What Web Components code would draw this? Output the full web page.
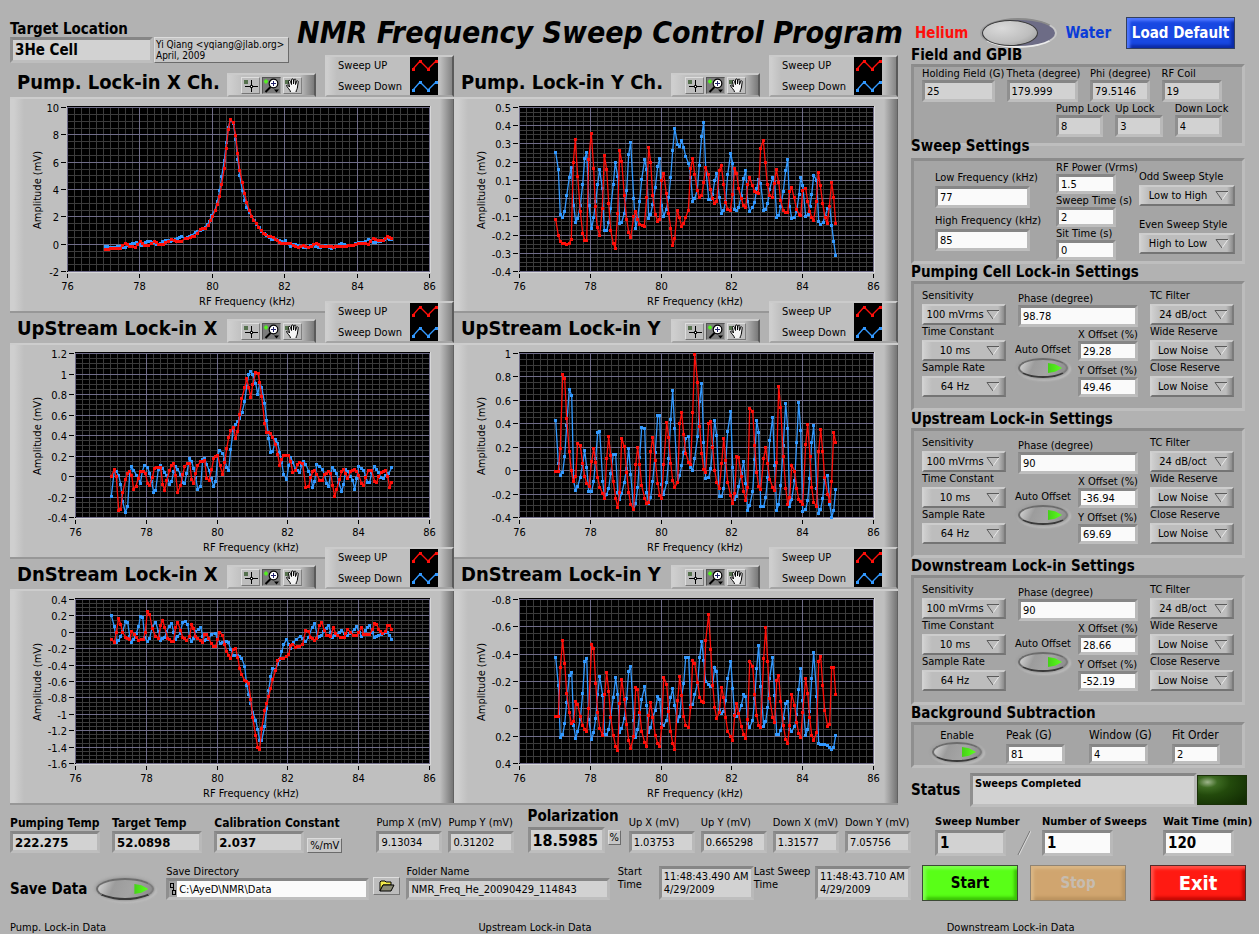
<!DOCTYPE html>
<html lang="en">
<head>
<meta charset="utf-8">
<title>NMR Frequency Sweep Control Program</title>
<style>
    html {
        background: #b2b2b2;
    }

    body {
        margin: 0;
        color: #000;
        font-family: "DejaVu Sans Condensed", "DejaVu Sans", "Noto Sans", sans-serif;
        font-size: 11px;
    }
</style>
</head>
<body>
<control-program></control-program>

<script>
// One list per trace: x y pairs, three units to a pixel. The origin is the
// position of the graph panel in the same units.
var TRACES = {
    pumpX: {
        origin: [30, 291],
        up: "317 748 325 748 340 745 360 744 375 730 388 738 405 742 421 724 432 737 445 736 462 725 475 732 490 733 505 724 515 718 530 723 545 723 555 716 570 712 582 708 592 700 600 688 615 685 625 677 632 660 638 648 647 630 652 612 659 590 665 552 673 505 679 445 685 388 691 358 700 368 707 407 713 460 719 510 727 547 734 580 740 608 748 630 755 648 761 660 770 670 776 682 790 700 805 709 820 712 832 722 845 730 870 730 880 737 895 741 910 735 925 741 935 739 948 729 960 739 980 738 1000 741 1020 738 1040 738 1060 737 1075 730 1105 732 1120 714 1135 722 1150 722 1163 709 1175 716",
        down: "317 739 335 742 360 740 375 742 390 733 410 728 425 737 435 727 452 724 468 733 480 731 497 720 512 725 525 718 545 708 555 716 575 707 585 697 600 692 615 683 628 665 635 645 645 630 652 605 659 572 665 530 673 480 679 428 685 382 691 360 700 370 707 418 713 478 719 525 727 570 734 600 740 623 748 637 755 650 770 672 785 695 800 706 815 717 830 718 845 725 855 722 870 740 880 732 895 736 910 742 925 742 940 733 955 743 975 737 995 744 1010 738 1025 729 1040 738 1060 736 1075 727 1090 728 1105 718 1120 727 1140 724 1160 716 1175 718"
    },
    pumpY: {
        origin: [12, 291],
        up: "317 658 325 706 331 724 338 730 350 733 358 730 364 718 370 487 376 419 383 529 391 634 398 700 404 721 410 721 416 479 424 400 431 505 436 620 442 683 449 706 457 625 463 466 470 508 476 610 482 692 490 730 496 745 503 640 509 451 515 484 523 587 530 658 536 697 542 712 551 650 557 634 563 658 569 673 583 679 590 592 596 442 602 487 608 587 616 643 623 664 629 658 635 541 641 520 649 580 656 640 662 685 668 737 674 715 682 631 688 652 695 679 701 671 707 652 715 631 722 505 728 475 734 523 742 571 748 592 755 587 761 547 767 502 775 523 781 568 788 595 794 610 800 604 808 511 814 496 821 553 827 608 833 628 841 631 848 583 854 505 860 520 866 566 874 595 880 616 887 623 893 553 899 532 907 556 914 574 925 580 932 445 940 421 946 487 952 553 959 586 967 592 973 550 979 508 986 547 992 601 1000 631 1007 637 1013 637 1019 574 1025 562 1032 592 1040 628 1047 643 1052 646 1058 571 1067 565 1073 604 1079 634 1085 652 1091 661 1099 604 1105 517 1111 556 1118 610 1125 652 1132 671 1138 619 1145 547 1151 592 1157 670",
        down: "317 457 325 508 331 643 338 653 344 634 350 587 358 532 364 502 371 616 377 667 383 655 391 616 398 553 404 475 410 458 417 616 425 685 431 652 437 604 443 553 449 508 457 566 463 692 470 692 476 667 482 625 490 553 496 487 503 529 509 671 515 667 523 640 530 571 536 463 542 427 551 595 557 685 563 655 569 604 575 538 584 478 590 508 596 655 602 643 608 613 616 562 623 499 629 475 635 616 641 649 649 628 656 592 662 532 668 451 674 385 683 433 689 439 695 422 701 442 707 469 716 491 722 532 728 604 734 595 742 571 748 496 755 409 761 367 767 502 776 598 782 598 788 583 794 541 800 520 808 592 815 640 821 631 827 604 833 523 842 460 848 491 854 628 860 631 866 622 874 586 881 535 887 511 893 604 899 634 908 622 914 607 920 565 926 538 932 550 941 631 947 628 953 610 959 568 968 532 974 547 980 652 986 646 992 619 1000 574 1007 511 1013 478 1019 619 1025 655 1034 652 1040 634 1047 583 1052 532 1058 556 1067 649 1074 643 1080 620 1085 583 1091 526 1100 541 1106 664 1112 673 1119 667 1125 650 1133 625 1139 619 1145 676 1151 724 1157 766"
    },
    upX: {
        origin: [30, 129],
        up: "334 529 343 509 349 530 356 631 362 628 368 577 377 538 383 520 389 514 395 526 401 569 408 558 421 514 430 514 436 520 443 550 449 556 457 533 463 506 470 503 482 502 488 553 494 571 500 541 509 511 515 496 521 490 527 526 533 577 542 556 548 523 554 499 563 490 569 490 575 538 581 550 587 520 593 496 602 485 614 482 620 535 627 541 635 508 641 475 653 465 660 497 668 523 674 487 680 445 686 412 692 392 700 382 707 415 713 394 719 344 725 296 734 263 740 236 746 262 752 292 758 254 767 217 774 220 779 247 785 290 794 370 800 397 812 400 818 412 827 434 833 463 839 496 845 479 851 466 866 466 872 484 878 517 887 511 893 493 899 487 908 490 917 562 926 559 932 533 938 515 944 511 950 523 959 541 967 541 973 523 985 515 992 520 998 556 1004 589 1010 567 1019 538 1025 514 1031 508 1037 520 1043 535 1052 514 1063 509 1070 514 1076 526 1085 550 1091 556 1097 532 1106 511 1115 512 1124 544 1130 547 1136 529 1145 517 1157 511 1163 529 1169 562 1175 547",
        down: "334 589 343 512 350 515 356 526 362 553 368 605 376 637 383 619 389 521 395 500 401 511 410 526 416 535 421 551 427 514 433 496 442 502 449 520 455 545 461 577 467 571 475 508 481 496 488 506 494 517 500 527 509 553 515 544 521 514 527 499 533 508 542 523 548 547 554 551 560 520 569 475 575 485 581 506 587 532 593 568 602 559 608 478 614 475 620 493 627 511 633 535 641 559 647 544 653 466 659 451 668 460 674 478 680 503 686 511 692 448 700 391 707 373 713 364 719 355 726 337 734 305 740 260 746 224 752 214 758 224 767 250 773 284 779 250 785 262 794 310 800 362 806 415 812 457 818 454 827 418 833 430 839 457 845 487 851 524 860 538 866 497 872 472 878 487 887 508 899 517 905 497 911 484 917 493 926 514 932 526 938 562 944 545 950 493 959 499 967 508 973 523 980 550 986 559 992 520 998 502 1004 511 1010 520 1016 547 1025 574 1031 553 1037 508 1043 514 1052 529 1058 541 1064 568 1070 535 1076 499 1085 505 1091 511 1097 530 1103 547 1109 547 1115 517 1124 499 1130 508 1136 517 1142 533 1151 535 1157 526 1166 520 1175 503"
    },
    upY: {
        origin: [12, 129],
        up: "317 514 325 514 331 445 338 224 344 236 350 356 358 454 364 511 370 544 377 529 383 430 391 436 398 490 404 529 410 550 417 559 425 484 431 445 437 487 443 533 449 562 458 580 464 595 470 475 476 410 482 467 490 544 497 595 503 622 509 577 515 415 523 439 530 517 536 577 542 613 551 628 557 493 563 442 569 493 575 556 584 595 590 610 596 607 602 454 608 412 616 481 623 550 629 586 635 595 641 493 650 367 656 412 662 490 668 541 674 562 683 547 689 370 695 338 701 403 707 460 716 487 722 493 728 338 734 163 743 247 749 379 755 460 761 508 767 517 776 370 782 364 788 442 794 511 800 547 808 565 815 490 821 415 827 481 833 547 842 586 848 610 854 580 860 469 866 472 874 529 881 574 887 601 893 562 899 325 908 334 914 436 920 517 926 559 932 569 941 475 947 442 953 490 959 538 968 562 974 571 980 487 986 259 992 323 1000 469 1007 565 1013 613 1019 592 1025 496 1034 514 1040 565 1046 598 1058 613 1067 433 1073 373 1080 469 1085 562 1091 607 1100 619 1106 454 1112 388 1118 454 1124 532 1133 583 1139 604 1145 544 1151 397 1157 427",
        down: "317 361 325 490 331 526 338 517 344 469 350 376 358 268 365 286 371 545 377 571 383 559 391 532 398 493 404 451 410 502 416 574 425 574 431 544 437 475 443 398 449 394 458 544 464 595 470 583 476 565 482 520 490 463 497 463 503 577 509 598 515 580 523 547 530 505 536 445 542 523 551 628 557 610 563 562 569 472 575 382 584 385 590 577 596 610 602 592 608 544 616 457 623 346 629 346 635 553 641 583 650 547 656 475 662 358 668 271 674 385 683 547 689 526 695 496 701 457 707 415 716 409 722 502 728 511 734 475 743 409 749 305 755 250 761 427 767 535 776 532 782 505 788 440 794 361 800 406 808 589 815 589 821 565 827 487 833 394 842 334 848 502 854 598 860 589 866 559 874 520 881 484 887 550 893 631 899 616 908 574 914 478 920 361 926 397 932 619 941 619 947 592 953 532 959 421 968 352 974 496 980 631 986 613 992 556 1000 437 1007 310 1013 385 1019 619 1025 598 1034 540 1040 427 1046 307 1052 391 1058 634 1067 628 1073 601 1079 535 1085 427 1091 376 1100 565 1106 640 1112 628 1118 595 1124 535 1133 526 1139 613 1145 652 1151 631 1157 568"
    },
    dnX: {
        origin: [30, 132],
        up: "334 283 343 292 349 262 356 220 362 238 368 262 377 277 389 283 395 259 404 268 416 286 430 283 436 262 442 200 449 209 457 250 467 274 475 280 482 241 488 226 494 247 503 279 515 289 521 289 527 247 533 232 542 256 548 277 560 286 569 274 575 238 581 249 587 274 600 286 608 291 614 267 620 267 633 294 641 304 647 304 653 282 659 262 668 271 674 298 680 319 686 331 692 340 700 312 707 310 713 337 719 370 725 389 734 406 746 415 752 463 758 518 767 571 773 606 779 613 785 550 794 496 800 475 806 454 812 430 818 404 827 376 833 346 840 340 851 341 860 334 866 328 872 302 878 298 887 307 899 304 908 297 917 256 926 260 932 277 944 286 950 280 958 242 965 232 973 256 980 271 992 274 1000 247 1007 265 1020 277 1032 277 1043 253 1052 262 1061 271 1070 271 1076 262 1085 247 1091 268 1109 268 1118 253 1124 235 1130 238 1136 253 1148 266 1157 259 1163 241 1169 241 1175 253",
        down: "334 211 343 244 350 292 356 286 362 274 368 259 377 229 383 232 389 274 395 292 401 283 409 265 416 244 421 214 428 217 434 277 442 289 449 280 457 244 467 232 475 259 482 286 494 277 500 259 508 243 515 235 521 262 527 283 540 265 548 232 556 229 563 238 569 277 575 289 581 280 587 259 602 247 608 274 614 286 625 283 635 268 645 265 653 280 660 295 674 289 685 292 692 313 700 330 712 331 725 340 734 364 740 421 746 448 752 475 758 502 767 526 773 553 779 586 785 586 794 544 800 490 806 436 812 394 818 371 827 373 833 358 839 343 845 320 851 298 860 283 866 298 872 310 880 292 890 283 900 274 908 280 917 289 926 277 936 247 944 236 953 277 965 271 978 249 986 241 992 262 998 277 1010 268 1025 256 1034 266 1043 271 1055 262 1063 253 1070 244 1077 262 1085 274 1095 256 1103 247 1109 241 1116 262 1124 277 1136 271 1150 264 1163 262 1175 283"
    },
    dnY: {
        origin: [12, 132],
        up: "317 514 325 514 331 367 338 286 344 355 350 445 358 502 364 535 371 529 377 469 383 478 391 514 398 541 404 553 410 559 416 490 425 298 431 310 437 415 443 502 449 550 458 571 464 448 470 382 476 439 482 517 490 571 497 604 503 616 509 475 515 403 523 463 530 538 536 586 542 610 551 574 557 427 563 433 569 502 575 559 584 592 590 604 596 511 602 472 608 517 616 571 623 595 629 604 635 547 641 397 650 418 656 499 662 559 668 595 674 613 683 466 689 394 695 451 701 514 707 541 716 547 722 487 728 346 734 355 743 412 749 457 755 469 761 472 767 286 776 208 782 313 788 421 794 487 800 520 808 502 815 427 821 457 827 517 833 559 842 574 848 586 854 511 860 475 866 505 874 544 881 568 887 580 893 523 899 349 908 364 914 448 920 511 926 541 932 547 941 340 947 247 953 349 959 460 968 517 974 532 980 406 986 391 992 469 1000 541 1007 583 1013 595 1019 541 1025 448 1034 481 1040 532 1046 565 1052 577 1058 502 1067 400 1073 445 1079 517 1085 571 1091 586 1100 562 1106 349 1112 334 1118 421 1124 496 1133 544 1139 538 1145 367 1151 367 1157 448",
        down: "317 337 325 421 331 577 338 569 344 536 350 472 358 391 365 382 371 541 377 580 383 559 391 523 398 445 404 349 410 340 416 523 425 583 431 562 437 520 443 448 449 394 458 451 464 568 470 569 476 553 482 515 490 457 497 397 503 448 509 562 515 550 523 520 530 460 536 379 542 364 551 526 557 577 563 553 569 508 575 463 584 424 590 481 596 562 602 547 608 517 616 496 623 454 629 463 635 535 641 541 650 526 656 490 662 457 668 430 674 481 683 529 689 514 695 451 701 415 707 337 716 337 722 481 728 478 734 448 743 415 749 337 755 289 761 346 767 409 776 418 782 424 788 421 794 367 800 379 808 493 815 505 821 499 827 466 833 400 842 349 848 430 854 508 860 514 866 508 874 481 881 448 887 454 893 535 899 547 908 526 914 460 920 370 926 301 932 424 941 544 947 529 953 487 959 400 968 337 974 451 980 568 986 568 992 556 1000 520 1007 475 1013 469 1019 553 1025 559 1034 544 1040 508 1046 433 1052 370 1058 466 1067 571 1073 553 1079 499 1085 400 1091 322 1100 454 1106 595 1112 598 1124 598 1133 601 1139 607 1145 613 1151 607 1157 571"
    }
};

// Text box or indicator with its caption above.
class NmrField extends HTMLElement {
    constructor() {
        super();
        this.attachShadow({ mode: "open" });
    }

    connectedCallback() {
        var readonly = this.hasAttribute("indicator") ? "readonly" : "";
        var label = this.getAttribute("label");
        var icon = this.hasAttribute("path")
            ? `<svg width="8" height="14" viewBox="0 0 8 14" shape-rendering="crispEdges"><path d="M1.5 1.5h3v4h-3zM4.500 5.500v3M3.500 8.500h3v4h-3z" fill="none" stroke="#000"/></svg>`
            : "";

        this.shadowRoot.innerHTML = `
            <style>
                :host {
                    display: flex;
                    flex-direction: column;
                    gap: var(--label-gap, 0px);
                    min-width: 0;
                }

                label {
                    font-size: var(--label-size, 11px);
                    line-height: 13px;
                    white-space: nowrap;
                }

                .box {
                    display: flex;
                    align-items: center;
                    height: var(--field-height, 22px);
                    box-sizing: border-box;
                    border: 3px solid;
                    border-color: #868686 #b9b9b9 #bebebe #8f8f8f;
                    background: #a2a2a2;
                }

                input {
                    flex: 1;
                    min-width: 0;
                    width: 0;
                    height: 100%;
                    box-sizing: border-box;
                    margin: 0;
                    padding: 0 2px;
                    border: 0;
                    border-radius: 0;
                    background: #fafafa;
                    color: #000;
                    font: inherit;
                    font-size: var(--value-size, 11px);
                }

                input[readonly] {
                    background: #d2d2d2;
                }

                :host([bold]) {
                    font-weight: bold;
                    --label-size: 12px;
                    --value-size: 13px;
                    --label-gap: 1px;
                }

                :host([large]) {
                    font-weight: bold;
                    --label-size: 15px;
                    --value-size: 16px;
                    --field-height: 26px;
                    --label-gap: 4px;
                }
            </style>
            <label for="value">${label}</label>
            <div class="box">${icon}<input id="value" value="${this.getAttribute("value")}" ${readonly}></div>
        `;
    }
}

// Multi-line indicator.
class NmrMemo extends HTMLElement {
    constructor() {
        super();
        this.attachShadow({ mode: "open" });
    }

    connectedCallback() {
        this.shadowRoot.innerHTML = `
            <style>
                :host {
                    display: block;
                    min-width: 0;
                }

                textarea {
                    display: block;
                    width: 100%;
                    height: 34px;
                    box-sizing: border-box;
                    margin: 0;
                    padding: 1px 2px;
                    border: 3px solid;
                    border-color: #868686 #b9b9b9 #bebebe #8f8f8f;
                    border-radius: 0;
                    background: #d2d2d2;
                    color: #000;
                    font: inherit;
                    line-height: 13px;
                    resize: none;
                    overflow: hidden;
                    white-space: pre;
                }
            </style>
            <textarea readonly aria-label="${this.getAttribute("label")}"></textarea>
        `;
        this.shadowRoot.querySelector("textarea").value = this.getAttribute("value").replace("|", "\n");
    }
}

class NmrRing extends HTMLElement {
    constructor() {
        super();
        this.attachShadow({ mode: "open" });
    }

    connectedCallback() {
        this.shadowRoot.innerHTML = `
            <style>
                :host {
                    display: flex;
                    flex-direction: column;
                    gap: 2px;
                    min-width: 0;
                }

                label {
                    line-height: 13px;
                    white-space: nowrap;
                }

                .ring {
                    display: grid;
                    align-items: center;
                }

                select,
                svg {
                    grid-area: 1 / 1;
                }

                select {
                    appearance: none;
                    width: 100%;
                    height: 21px;
                    box-sizing: border-box;
                    margin: 0;
                    padding: 0 19px 0 1px;
                    border: 2px solid;
                    border-color: #cdcdcd #7b7b7b #747474 #d2d2d2;
                    border-radius: 0;
                    background: linear-gradient(90deg, #cfcfcf, #bdbdbd 8px, #bdbdbd calc(100% - 6px), #8c8c8c);
                    color: #000;
                    font: inherit;
                    text-align-last: center;
                }

                svg {
                    justify-self: end;
                    margin-right: 6px;
                    pointer-events: none;
                }
            </style>
            <label for="choice">${this.getAttribute("label")}</label>
            <div class="ring">
                <select id="choice"><option>${this.getAttribute("value")}</option></select>
                <svg width="14" height="10" viewBox="0 0 14 10" fill="none">
                    <path d="M13 .5 7 9" stroke="#e8e8e8"/>
                    <path d="M13 .5H1L7 9" stroke="#5a5a5a"/>
                </svg>
            </div>
        `;
    }
}

// Oval push button with a green pointer.
class NmrToggle extends HTMLElement {
    constructor() {
        super();
        this.attachShadow({ mode: "open" });
    }

    connectedCallback() {
        this.shadowRoot.innerHTML = `
            <style>
                :host {
                    display: flex;
                    flex-direction: column;
                    align-items: center;
                    gap: var(--toggle-gap, 2px);
                    --width: 50px;
                }

                :host([inline]) {
                    flex-direction: row;
                    gap: 9px;
                    font-size: 15px;
                    font-weight: bold;
                    --width: 58px;
                }

                label {
                    line-height: 13px;
                    white-space: nowrap;
                }

                input {
                    appearance: none;
                    display: flex;
                    align-items: center;
                    justify-content: flex-end;
                    flex: none;
                    width: var(--width);
                    height: 20px;
                    box-sizing: border-box;
                    margin: 0;
                    padding-right: 4px;
                    border: 2px solid;
                    border-color: #6c6c6c #7d7d7d #3a3a3a #6c6c6c;
                    border-radius: 50%;
                    background: linear-gradient(115deg, #d8d8d8, #9c9c9c 30%, #a4a4a4 60%, #8a8a8a);
                    box-shadow: 0 0 3px 1px #8f8f8f, 1px 1px 2px 2px #c4c4c4;
                }

                :host([inline]) input {
                    height: 22px;
                }

                input::after {
                    content: "";
                    width: 14px;
                    height: 10px;
                    background: linear-gradient(90deg, #45d018, #5cff1e);
                    clip-path: polygon(0 0, 50% 12%, 100% 50%, 50% 88%, 0 100%);
                }
            </style>
            <label for="state">${this.getAttribute("label")}</label>
            <input id="state" type="checkbox" checked>
        `;
    }
}

class NmrButton extends HTMLElement {
    constructor() {
        super();
        this.attachShadow({ mode: "open" });
    }

    connectedCallback() {
        this.shadowRoot.innerHTML = `
            <style>
                :host {
                    display: block;
                    --face: #59ff17;
                    --light: #7dff4c;
                    --shade: #3cc406;
                    --edge: #3c4a36;
                    --ink: #000;
                }

                :host([kind="load"]) {
                    --face: #1848e2;
                    --light: #5078ff;
                    --shade: #0c2ba6;
                    --edge: #33405e;
                    --ink: #fff;
                }

                :host([kind="stop"]) {
                    --face: #d0a56f;
                    --light: #dab684;
                    --shade: #bb935f;
                    --edge: #8f8474;
                    --ink: #c6bcb0;
                }

                :host([kind="exit"]) {
                    --face: #ff1a12;
                    --light: #ff5148;
                    --shade: #c60a04;
                    --edge: #552b2a;
                    --ink: #fff;
                    font-size: 20px;
                }

                button {
                    display: block;
                    width: 100%;
                    height: 36px;
                    margin: 0;
                    padding: 0;
                    border: 1px solid var(--edge);
                    border-radius: 0;
                    background: var(--face);
                    box-shadow: inset 3px 3px 3px var(--light), inset -3px -3px 3px var(--shade);
                    color: var(--ink);
                    font: inherit;
                    font-weight: bold;
                    white-space: nowrap;
                }

                :host([kind="load"]) button {
                    height: 32px;
                }
            </style>
            <button type="button"${this.hasAttribute("disabled") ? " disabled" : ""}><slot></slot></button>
        `;
    }
}

// Titled group of controls.
class NmrSection extends HTMLElement {
    constructor() {
        super();
        this.attachShadow({ mode: "open" });
    }

    connectedCallback() {
        this.shadowRoot.innerHTML = `
            <style>
                :host {
                    display: block;
                    position: relative;
                }

                h2 {
                    margin: 0;
                    font-size: 15px;
                    line-height: 17px;
                    white-space: nowrap;
                }

                /* The heading runs over the frame of the group above. */
                :host([tight]) h2 {
                    margin: -8px 0 3px;
                }

                .frame {
                    border: 3px solid;
                    border-color: #8c8c8c #bcbcbc #bebebe #8f8f8f;
                    background: #a5a5a5;
                }
            </style>
            <h2>${this.getAttribute("heading")}</h2>
            <div class="frame"><slot></slot></div>
        `;
    }
}

class LockinSettings extends HTMLElement {
    constructor() {
        super();
        this.attachShadow({ mode: "open" });
    }

    connectedCallback() {
        this.shadowRoot.innerHTML = `
            <style>
                :host {
                    display: block;
                }

                .columns {
                    display: grid;
                    grid-template-columns: 84fr 124fr 84fr;
                    gap: 10px;
                    padding: 5px 8px 11px;
                }

                .middle {
                    padding: 3px 2px 0;
                }

                .offsets {
                    display: grid;
                    grid-template-columns: minmax(0, 1fr) 60px;
                    gap: 10px;
                    padding-top: 1px;
                }

                .offsets nmr-toggle {
                    padding-top: 15px;
                }

                .pair {
                    display: grid;
                    gap: 3px;
                    --field-height: 20px;
                }
            </style>
            <nmr-section heading="${this.getAttribute("heading")}">
                <div class="columns">
                    <div>
                        <nmr-ring label="Sensitivity" value="100 mVrms"></nmr-ring>
                        <nmr-ring label="Time Constant" value="10 ms"></nmr-ring>
                        <nmr-ring label="Sample Rate" value="64 Hz"></nmr-ring>
                    </div>
                    <div class="middle">
                        <nmr-field label="Phase (degree)" value="${this.getAttribute("phase")}"></nmr-field>
                        <div class="offsets">
                            <nmr-toggle label="Auto Offset"></nmr-toggle>
                            <div class="pair">
                                <nmr-field label="X Offset (%)" value="${this.getAttribute("x")}"></nmr-field>
                                <nmr-field label="Y Offset (%)" value="${this.getAttribute("y")}"></nmr-field>
                            </div>
                        </div>
                    </div>
                    <div>
                        <nmr-ring label="TC Filter" value="24 dB/oct"></nmr-ring>
                        <nmr-ring label="Wide Reserve" value="Low Noise"></nmr-ring>
                        <nmr-ring label="Close Reserve" value="Low Noise"></nmr-ring>
                    </div>
                </div>
            </nmr-section>
        `;
    }
}

// Cursor, zoom and pan buttons of a graph.
class GraphPalette extends HTMLElement {
    constructor() {
        super();
        this.attachShadow({ mode: "open" });
    }

    connectedCallback() {
        this.shadowRoot.innerHTML = `
            <style>
                :host {
                    display: flex;
                    align-items: center;
                    gap: 2px;
                    height: 24px;
                    box-sizing: border-box;
                    padding-left: 12px;
                    border: 2px solid;
                    border-color: #cbcbcb #5a5a5a #a4a4a4 #cecece;
                    background: linear-gradient(90deg, #cfcfcf, #bfbfbf 14px, #bfbfbf calc(100% - 14px), #7a7a7a);
                }

                button {
                    width: 19px;
                    height: 17px;
                    margin: 0;
                    padding: 0;
                    border: 1px solid;
                    border-color: #dedede #808080 #767676 #dedede;
                    border-radius: 0;
                    background: #bdbdbd;
                }

                button.on {
                    border-color: #555 #a0a0a0 #a0a0a0 #555;
                    background: #7b7b7b;
                }

                svg {
                    display: block;
                }
            </style>
            <button type="button" aria-label="Cursor">
                <svg width="17" height="15" viewBox="0 0 17 15">
                    <path d="M2 2h4v4H2z" fill="#56714e"/>
                    <path d="M9.500 2v12M3 8.500h13" stroke="#000"/>
                    <path d="M8.500 7.500h2v2h-2z" fill="#fff" stroke="#000"/>
                </svg>
            </button>
            <button type="button" class="on" aria-label="Zoom">
                <svg width="17" height="15" viewBox="0 0 17 15">
                    <path d="M1 3.500h4M3 1.500v4" stroke="#54f021" stroke-width="2"/>
                    <path d="m7.500 9-5 5" stroke="#000" stroke-width="2"/>
                    <circle cx="10.500" cy="5.500" r="4.300" fill="#fff" stroke="#000" stroke-width="1.200"/>
                    <path d="M8 5.500h5M10.500 3v5" stroke="#22226a"/>
                    <path d="M11 11.500h5l-2.500 3z"/>
                </svg>
            </button>
            <button type="button" aria-label="Pan">
                <svg width="17" height="15" viewBox="0 0 17 15">
                    <path d="M1 2h4v4H1z" fill="#56714e"/>
                    <path d="M6.500 14c0-2-3.500-4.500-4-6.500 1-1 2 0 3 1.500L4.500 3.500c0-1.500 1.500-1.500 2 0L7.500 6.500V2c0-1.500 2-1.500 2 0v4l.5-4c.5-1.500 2-1 1.900.3L11.500 6.500l1-3c.7-1.300 2-.6 1.700.6L13.500 9c-.2 2.500-1.300 3-1.500 5" fill="#f4f4f4" stroke="#000"/>
                </svg>
            </button>
        `;
    }
}

class SweepGraph extends HTMLElement {
    constructor() {
        super();
        this.attachShadow({ mode: "open" });
    }

    connectedCallback() {
        this.left = Number(this.getAttribute("left") || 66);
        this.right = 420;
        this.upper = 10;
        this.lower = 174;

        this.shadowRoot.innerHTML = `
            <style>
                :host {
                    display: block;
                    position: relative;
                    min-width: 0;
                }

                /* The legend is taller than the row and reaches up over the panel above. */
                header {
                    display: grid;
                    grid-template: 30px / minmax(0, 1fr) 89px 129px;
                    column-gap: 9px;
                    align-items: end;
                }

                h2 {
                    margin: 0;
                    padding-left: 7px;
                    font-size: 20px;
                    line-height: 30px;
                    white-space: nowrap;
                }

                .legend {
                    display: grid;
                    grid-template-columns: 1fr 28px;
                    align-content: center;
                    height: 42px;
                    box-sizing: border-box;
                    padding: 0 14px 0 11px;
                    border: 2px solid;
                    border-color: #cbcbcb #5a5a5a #a4a4a4 #cecece;
                    background: linear-gradient(90deg, #cfcfcf, #bfbfbf 10px, #bfbfbf calc(100% - 12px), #868686);
                }

                .legend span {
                    line-height: 21px;
                }

                .legend svg {
                    grid-area: 1 / 2 / 3 / 3;
                    align-self: center;
                    display: block;
                    background: #000;
                }

                .panel {
                    box-sizing: border-box;
                    background: linear-gradient(90deg, #cfcfcf 4px, #bfbfbf 14px, #bfbfbf calc(100% - 14px), #757575 calc(100% - 1px), #4f4f4f);
                    box-shadow: inset 0 2px #cdcdcd, inset 0 -2px #979797;
                }

                .panel svg {
                    display: block;
                    width: 100%;
                    height: auto;
                }

                text {
                    font-size: 11px;
                }
            </style>
            <header>
                <h2>${this.getAttribute("heading")}</h2>
                <graph-palette></graph-palette>
                <div class="legend">
                    <span>Sweep UP</span>
                    <span>Sweep Down</span>
                    <svg width="28" height="38" viewBox="0 0 28 38">
                        ${this.plot([[3, 12], [10, 4], [18, 12], [26, 4]], "#ff0f0a")}
                        ${this.plot([[3, 33], [10, 25], [18, 33], [26, 25]], "#3399ff")}
                    </svg>
                </div>
            </header>
            <div class="panel">
                <svg viewBox="0 0 444 216" role="img" aria-label="Amplitude against RF frequency">
                    ${this.grid()}
                    ${this.traces()}
                </svg>
            </div>
        `;
    }

    grid() {
        var top = Number(this.getAttribute("top"));
        var bottom = Number(this.getAttribute("bottom"));
        var step = Number(this.getAttribute("step"));
        var rows = Math.round(Math.abs(top - bottom) / step);
        var width = this.right - this.left;
        var height = this.lower - this.upper;
        var minor = "";
        var major = "";
        var marks = "";
        var labels = "";
        var i, pos;

        for (i = 0; i <= 50; i++) {
            pos = Math.round(this.left + width * i / 50) - 0.5;
            if (i % 10) {
                minor += `M${pos} ${this.upper}V${this.lower}`;
                continue;
            }
            major += `M${pos} ${this.upper}V${this.lower}`;
            marks += `M${pos} 177v4`;
            labels += `<text x="${pos}" y="193" text-anchor="middle">${76 + i / 5}</text>`;
        }

        for (i = 0; i <= rows * 4; i++) {
            pos = Math.round(this.upper + height * i / (rows * 4)) + 0.5;
            if (i % 4) {
                minor += `M${this.left} ${pos}H${this.right}`;
                continue;
            }
            major += `M${this.left} ${pos}H${this.right}`;
            marks += `M${this.left - 7} ${pos}h5`;
            labels += `<text x="${this.left - 9}" y="${pos + 4}" text-anchor="end">${Number((top + (bottom - top) * i / (rows * 4)).toFixed(1))}</text>`;
        }

        return `
            <rect x="${this.left - 1}" y="9" width="${width + 2}" height="167" fill="#d8d8d8"/>
            <rect x="${this.left - 1}" y="9" width="${width + 1}" height="166" fill="#000"/>
            <g stroke-width="1" shape-rendering="crispEdges">
                <path d="${minor}" stroke="#3b3b3b"/>
                <path d="${major}" stroke="#6f6c88"/>
                <path d="${marks}" stroke="#000"/>
            </g>
            ${labels}
            <text x="${(this.left + this.right) / 2 - 2}" y="208" text-anchor="middle">RF Frequency (kHz)</text>
            <text transform="translate(31 93) rotate(-90)" text-anchor="middle">Amplitude (mV)</text>
        `;
    }

    traces() {
        var data = TRACES[this.getAttribute("trace")];
        return this.plot(this.samples(data.down, data.origin), "#3399ff") +
            this.plot(this.samples(data.up, data.origin), "#ff0f0a");
    }

    samples(list, origin) {
        var numbers = list.split(" ").map(Number);
        var points = [];

        for (var i = 0; i < numbers.length; i += 2) {
            var x = (numbers[i] - origin[0]) / 3;
            var y = (numbers[i + 1] - origin[1]) / 3;
            var last = points[points.length - 1];
            var steps = last ? Math.round((x - last[0]) / 2.4) : 1;
            for (var n = 1; n < steps; n++) {
                points.push([last[0] + (x - last[0]) * n / steps, last[1] + (y - last[1]) * n / steps]);
            }
            points.push([x, y]);
        }
        return points;
    }

    plot(points, color) {
        var line = points.map(function (p) {
            return p[0].toFixed(1) + "," + p[1].toFixed(1);
        }).join(" ");
        var dots = points.map(function (p) {
            return `M${Math.round(p[0] - 1.5)} ${Math.round(p[1] - 1.5)}h3v3h-3z`;
        }).join("");
        return `<polyline points="${line}" fill="none" stroke="${color}" stroke-width="1.3"/><path d="${dots}" fill="${color}"/>`;
    }
}

class ControlProgram extends HTMLElement {
    constructor() {
        super();
        this.attachShadow({ mode: "open" });
    }

    connectedCallback() {
        this.shadowRoot.innerHTML = `
            <style>
                :host {
                    display: block;
                }

                main {
                    display: grid;
                    grid-template-columns: minmax(0, 911fr) minmax(0, 348fr);
                }

                .left {
                    padding-left: 10px;
                }

                .title {
                    display: flex;
                    align-items: flex-end;
                    min-height: 67px;
                    box-sizing: border-box;
                    padding: 15px 0 4px;
                }

                .title nmr-field {
                    flex: none;
                    width: 143px;
                    --field-height: 26px;
                    --label-size: 15px;
                    --value-size: 15px;
                    --label-gap: 1px;
                }

                .note {
                    flex: none;
                    width: 135px;
                    height: 26px;
                    box-sizing: border-box;
                    margin: 0 0 0 1px;
                    padding: 1px;
                    border: 1px solid;
                    border-color: #dcdcdc #6b6b6b #6b6b6b #dcdcdc;
                    background: #c6c6c6;
                    font-size: 10px;
                    line-height: 11px;
                    white-space: nowrap;
                }

                h1 {
                    flex: 1;
                    align-self: flex-start;
                    margin: 0;
                    font-size: 30px;
                    font-style: italic;
                    line-height: 36px;
                    text-align: center;
                    white-space: nowrap;
                }

                .graphs {
                    display: grid;
                    grid-template-columns: repeat(2, minmax(0, 1fr));
                    margin-right: 13px;
                }

                .readouts {
                    display: grid;
                    grid-template-columns: 102fr 102fr 162fr 72fr 79fr 101fr 72fr 72fr 72fr 66fr;
                    align-items: end;
                    height: 48px;
                    --label-gap: 2px;
                }

                .readouts > * {
                    min-width: 0;
                }

                .readouts nmr-field {
                    width: 66px;
                }

                .readouts nmr-field[bold] {
                    width: 90px;
                }

                .readouts nmr-field[large] {
                    width: 77px;
                }

                .unit {
                    display: flex;
                    align-items: flex-end;
                    gap: 3px;
                }

                .unit span {
                    padding: 0 2px;
                    border: 1px solid;
                    border-color: #dcdcdc #6b6b6b #6b6b6b #dcdcdc;
                    background: #c6c6c6;
                    line-height: 13px;
                }

                .unit nmr-field[large] + span {
                    padding: 0 1px;
                    margin-bottom: 8px;
                }

                .files {
                    display: grid;
                    grid-template-columns: 156fr 207fr 33fr 211fr 41fr 95fr 61fr 96fr;
                    align-items: end;
                    padding: 12px 0 21px;
                }

                .files nmr-toggle {
                    justify-self: start;
                }

                .files nmr-field[path] {
                    margin-right: 4px;
                }

                .files nmr-field[indicator] {
                    margin-right: 8px;
                }

                .browse {
                    width: 27px;
                    height: 18px;
                    margin: 0 0 5px;
                    padding: 0;
                    border: 1px solid;
                    border-color: #dedede #777 #777 #dedede;
                    border-radius: 0;
                    background: #bdbdbd;
                }

                .browse svg {
                    display: block;
                    margin: auto;
                }

                .caption {
                    align-self: start;
                    line-height: 13px;
                }

                .state {
                    display: flex;
                    align-items: center;
                    padding-top: 17px;
                    margin-bottom: -2px;
                    font-size: 15px;
                    font-weight: bold;
                }

                .helium {
                    padding-left: 4px;
                    color: #ff0f0a;
                }

                .water {
                    color: #0a3cd8;
                }

                .switch {
                    appearance: none;
                    display: flex;
                    flex: none;
                    width: 77px;
                    height: 30px;
                    box-sizing: border-box;
                    margin: 0 8px 0 12px;
                    border: 2px solid;
                    border-color: #8a8a8a #c8c8c8 #ececec #a0a0a0;
                    border-radius: 50%;
                    background: #6d6c86;
                }

                .switch::before {
                    content: "";
                    width: 54px;
                    height: 24px;
                    border: 1px solid #3a3a3a;
                    border-radius: 50%;
                    background: radial-gradient(ellipse at 35% 30%, #dadada, #bebebe 60%, #8e8e8e);
                }

                .state nmr-button {
                    flex: none;
                    width: 109px;
                    margin-left: auto;
                    margin-right: 24px;
                }

                .groups {
                    display: block;
                    margin-right: 14px;
                }

                .row {
                    display: grid;
                    grid-template-columns: 72fr 71fr 59fr 60fr;
                    gap: 12px;
                    padding: 0 20px 0 8px;
                }

                .row.locks {
                    grid-template-columns: repeat(3, 47fr);
                    padding: 0 20px 6px 142px;
                }

                .sweep {
                    display: grid;
                    grid-template-columns: 121fr 83fr 96fr;
                    padding: 0 7px 1px 21px;
                }

                .sweep > div {
                    display: grid;
                    align-content: start;
                }

                .bounds {
                    gap: 6px;
                    padding: 10px 26px 0 0;
                    --label-gap: 2px;
                }

                .times {
                    --field-height: 20px;
                }

                .times nmr-field {
                    width: 60px;
                }

                .styles {
                    gap: 12px;
                    padding-top: 9px;
                }

                .background {
                    display: grid;
                    grid-template-columns: 50fr 59fr 59fr 48fr;
                    gap: 24px;
                    align-items: start;
                    padding: 4px 22px 1px 18px;
                    --field-height: 20px;
                    --label-gap: 2px;
                    --label-size: 12px;
                    --toggle-gap: 0px;
                }

                .status {
                    display: grid;
                    grid-template-columns: 59fr 227fr 50fr;
                    align-items: center;
                    margin: 5px 12px 8px 0;
                    font-size: 15px;
                    font-weight: bold;
                }

                .status nmr-memo {
                    font-size: 11px;
                }

                .lamp {
                    height: 30px;
                    box-sizing: border-box;
                    border: 1px solid #1a3008;
                    background: radial-gradient(ellipse at 20% 22%, #9fb58c, #3d6a22 18%, #234a0c 42%, #122c03 90%);
                }

                .counts {
                    display: grid;
                    grid-template-columns: 71fr 36fr 71fr 50fr 71fr 25fr;
                    padding-left: 24px;
                }

                .counts nmr-field {
                    --field-height: 26px;
                    --label-size: 11px;
                    --value-size: 15px;
                    --label-gap: 2px;
                }

                .counts nmr-field:last-child {
                    grid-column: 5;
                }

                .counts svg {
                    display: block;
                    margin: 16px 0 0 11px;
                }

                .actions {
                    display: grid;
                    grid-template-columns: 96fr 96fr 0 96fr;
                    column-gap: 12px;
                    padding: 9px 13px 0 11px;
                    font-size: 15px;
                }

                .actions nmr-button:last-child {
                    grid-column: 4;
                }

                footer {
                    display: grid;
                    grid-template-columns: 3fr 3fr 2fr;
                    padding-left: 10px;
                    line-height: 13px;
                }
            </style>
            <main>
                <div class="left">
                    <div class="title">
                        <nmr-field bold indicator label="Target Location" value="3He Cell"></nmr-field>
                        <p class="note">Yi Qiang &lt;yqiang@jlab.org&gt;<br>April, 2009</p>
                        <h1>NMR Frequency Sweep Control Program</h1>
                    </div>
                    <div class="graphs">
                        <sweep-graph heading="Pump. Lock-in X Ch." trace="pumpX" left="58" top="10" bottom="-2" step="2"></sweep-graph>
                        <sweep-graph heading="Pump. Lock-in Y Ch." trace="pumpY" top="0.5" bottom="-0.4" step="0.1"></sweep-graph>
                        <sweep-graph heading="UpStream Lock-in X" trace="upX" top="1.2" bottom="-0.4" step="0.2"></sweep-graph>
                        <sweep-graph heading="UpStream Lock-in Y" trace="upY" top="1" bottom="-0.4" step="0.2"></sweep-graph>
                        <sweep-graph heading="DnStream Lock-in X" trace="dnX" top="0.4" bottom="-1.6" step="0.2"></sweep-graph>
                        <sweep-graph heading="DnStream Lock-in Y" trace="dnY" top="-0.8" bottom="0.4" step="0.2"></sweep-graph>
                    </div>
                    <div class="readouts">
                        <nmr-field bold indicator label="Pumping Temp" value="222.275"></nmr-field>
                        <nmr-field bold indicator label="Target Temp" value="52.0898"></nmr-field>
                        <div class="unit">
                            <nmr-field bold indicator label="Calibration Constant" value="2.037"></nmr-field>
                            <span>%/mV</span>
                        </div>
                        <nmr-field indicator label="Pump X (mV)" value="9.13034"></nmr-field>
                        <nmr-field indicator label="Pump Y (mV)" value="0.31202"></nmr-field>
                        <div class="unit">
                            <nmr-field large indicator label="Polarization" value="18.5985"></nmr-field>
                            <span>%</span>
                        </div>
                        <nmr-field indicator label="Up X (mV)" value="1.03753"></nmr-field>
                        <nmr-field indicator label="Up Y (mV)" value="0.665298"></nmr-field>
                        <nmr-field indicator label="Down X (mV)" value="1.31577"></nmr-field>
                        <nmr-field indicator label="Down Y (mV)" value="7.05756"></nmr-field>
                    </div>
                    <div class="files">
                        <nmr-toggle inline label="Save Data"></nmr-toggle>
                        <nmr-field path label="Save Directory" value="C:\\AyeD\\NMR\\Data"></nmr-field>
                        <button class="browse" type="button" aria-label="Browse">
                            <svg width="16" height="12" viewBox="0 0 16 12">
                                <path d="M1 11V2l1-1h4l1 1h5v3H4z" fill="#f2ea4a" stroke="#000"/>
                                <path d="M1 11 4 5h11l-3 6z" fill="#8a8a74" stroke="#000"/>
                            </svg>
                        </button>
                        <nmr-field indicator label="Folder Name" value="NMR_Freq_He_20090429_114843"></nmr-field>
                        <span class="caption">Start<br>Time</span>
                        <nmr-memo label="Start Time" value="11:48:43.490 AM|4/29/2009"></nmr-memo>
                        <span class="caption">Last Sweep<br>Time</span>
                        <nmr-memo label="Last Sweep Time" value="11:48:43.710 AM|4/29/2009"></nmr-memo>
                    </div>
                </div>
                <div>
                    <div class="state">
                        <label for="cell" class="helium">Helium</label>
                        <input id="cell" class="switch" type="checkbox">
                        <label for="cell" class="water">Water</label>
                        <nmr-button kind="load">Load Default</nmr-button>
                    </div>
                    <div class="groups">
                        <nmr-section heading="Field and GPIB">
                            <div class="row">
                                <nmr-field indicator label="Holding Field (G)" value="25"></nmr-field>
                                <nmr-field indicator label="Theta (degree)" value="179.999"></nmr-field>
                                <nmr-field indicator label="Phi (degree)" value="79.5146"></nmr-field>
                                <nmr-field indicator label="RF Coil" value="19"></nmr-field>
                            </div>
                            <div class="row locks">
                                <nmr-field indicator label="Pump Lock" value="8"></nmr-field>
                                <nmr-field indicator label="Up Lock" value="3"></nmr-field>
                                <nmr-field indicator label="Down Lock" value="4"></nmr-field>
                            </div>
                        </nmr-section>
                        <nmr-section tight heading="Sweep Settings">
                            <div class="sweep">
                                <div class="bounds">
                                    <nmr-field label="Low Frequency (kHz)" value="77"></nmr-field>
                                    <nmr-field label="High Frequency (kHz)" value="85"></nmr-field>
                                </div>
                                <div class="times">
                                    <nmr-field label="RF Power (Vrms)" value="1.5"></nmr-field>
                                    <nmr-field label="Sweep Time (s)" value="2"></nmr-field>
                                    <nmr-field label="Sit Time (s)" value="0"></nmr-field>
                                </div>
                                <div class="styles">
                                    <nmr-ring label="Odd Sweep Style" value="Low to High"></nmr-ring>
                                    <nmr-ring label="Even Sweep Style" value="High to Low"></nmr-ring>
                                </div>
                            </div>
                        </nmr-section>
                        <lockin-settings heading="Pumping Cell Lock-in Settings" phase="98.78" x="29.28" y="49.46"></lockin-settings>
                        <lockin-settings heading="Upstream Lock-in Settings" phase="90" x="-36.94" y="69.69"></lockin-settings>
                        <lockin-settings heading="Downstream Lock-in Settings" phase="90" x="28.66" y="-52.19"></lockin-settings>
                        <nmr-section heading="Background Subtraction">
                            <div class="background">
                                <nmr-toggle label="Enable"></nmr-toggle>
                                <nmr-field label="Peak (G)" value="81"></nmr-field>
                                <nmr-field label="Window (G)" value="4"></nmr-field>
                                <nmr-field label="Fit Order" value="2"></nmr-field>
                            </div>
                        </nmr-section>
                    </div>
                    <div class="status">
                        <span>Status</span>
                        <nmr-memo label="Status" value="Sweeps Completed"></nmr-memo>
                        <div class="lamp"></div>
                    </div>
                    <div class="counts">
                        <nmr-field bold indicator label="Sweep Number" value="1"></nmr-field>
                        <svg width="14" height="25" viewBox="0 0 14 25"><path d="M13 0 1 24" stroke="#6a6a6a"/><path d="M14 0 2 24" stroke="#dcdcdc"/></svg>
                        <nmr-field bold label="Number of Sweeps" value="1"></nmr-field>
                        <nmr-field bold label="Wait Time (min)" value="120"></nmr-field>
                    </div>
                    <div class="actions">
                        <nmr-button>Start</nmr-button>
                        <nmr-button kind="stop" disabled>Stop</nmr-button>
                        <nmr-button kind="exit">Exit</nmr-button>
                    </div>
                </div>
            </main>
            <footer>
                <span>Pump. Lock-in Data</span>
                <span>Upstream Lock-in Data</span>
                <span>Downstream Lock-in Data</span>
            </footer>
        `;
    }
}

customElements.define("nmr-field", NmrField);
customElements.define("nmr-memo", NmrMemo);
customElements.define("nmr-ring", NmrRing);
customElements.define("nmr-toggle", NmrToggle);
customElements.define("nmr-button", NmrButton);
customElements.define("nmr-section", NmrSection);
customElements.define("lockin-settings", LockinSettings);
customElements.define("graph-palette", GraphPalette);
customElements.define("sweep-graph", SweepGraph);
customElements.define("control-program", ControlProgram);
</script>
</body>
</html>
